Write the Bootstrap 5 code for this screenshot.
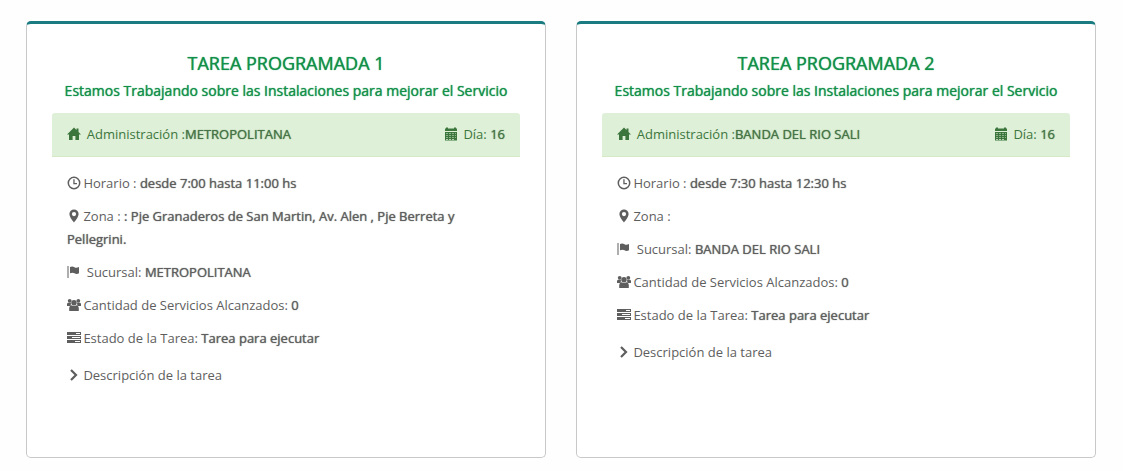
<!DOCTYPE html>
<html lang="es">
<head>
<meta charset="utf-8">
<meta name="viewport" content="width=device-width, initial-scale=1">
<title>Tareas programadas</title>
<link href="https://cdn.jsdelivr.net/npm/bootstrap@5.3.0/dist/css/bootstrap.min.css" rel="stylesheet">
<style>
body { font-family: "Open Sans", sans-serif; font-size: 13px; line-height: 23px; color: #5e5e5e; background: #fefefe; }
.page { padding: 21px 27px 13px 26px; }
.task-row { --bs-gutter-x: 30px; --bs-gutter-y: 30px; }
.task { border: 1px solid #c8c8c8; border-top: 3px solid #1a7b80; border-radius: 5px; background: #fff; padding: 28px 25px 60px; min-height: 437px; }
.task h2, .task h3, .task strong { font-weight: 400; text-shadow: 0 0 1px currentColor; }
.task h2 { font-size: 18px; line-height: 22px; color: #12904a; margin: 0 0 7px; }
.task h3 { font-size: 14px; line-height: 20px; color: #12904a; margin: 0 0 12px; }
.task-head { background: #dff0d8; color: #3c763d; border-bottom: 1px solid #d6e9c6; border-radius: 3px 3px 0 0; padding: 10px 15px; }
.task-head strong { color: #467446; }
.task-info { padding: 15px 15px 0; }
.task-info p { margin: 0 0 10px; }
.task a { color: inherit; text-decoration: none; display: inline-block; margin-top: 4px; }
.ico { width: 14px; height: 14px; margin-right: -1px; fill: currentColor; vertical-align: -2px; }
</style>
</head>
<body>
<svg class="d-none" aria-hidden="true">
  <symbol id="home" viewBox="0 0 14 14"><path d="M7 .5 0 7.600h2V13h3.600V9h2.800v4H12V7.600h2L11.500 5V1.500h-2V3z"/></symbol>
  <symbol id="calendar" viewBox="0 0 14 14"><path fill-rule="evenodd" d="M1 1.500h1V.500h2v1h6V.500h2v1h1V4H1zM1 5h12v8.500H1zM2 6.200v.6h2v-.6zm3 0v.6h2v-.6zm3 0v.6h2v-.6zm3 0v.6h1v-.6zM2 8.200v.6h2v-.6zm3 0v.6h2v-.6zm3 0v.6h2v-.6zm3 0v.6h1v-.6zM2 10.200v.6h2v-.6zm3 0v.6h2v-.6zm3 0v.6h2v-.6zm3 0v.6h1v-.6zM2 12.100v.6h2v-.6zm3 0v.6h2v-.6zm3 0v.6h2v-.6z"/></symbol>
  <symbol id="clock" viewBox="0 0 14 14"><circle cx="7" cy="7" r="5.700" fill="none" stroke="currentColor" stroke-width="1.500"/><path d="M6.300 3.300h1.300V7H10v1.300H6.300z"/></symbol>
  <symbol id="pin" viewBox="0 0 14 14"><path fill-rule="evenodd" d="M7 .500a4.600 4.600 0 0 0-4.600 4.600C2.400 8.500 7 13.500 7 13.500s4.600-5 4.600-8.400A4.600 4.600 0 0 0 7 .500zM7 3a2.100 2.100 0 1 1 0 4.200A2.100 2.100 0 0 1 7 3z"/></symbol>
  <symbol id="flag" viewBox="0 0 14 14"><path d="M.500 1h1v12h-1zM3 2c2-1 3.300-.5 4.500.200S10 3 12 2v6.300c-2 1-3.300.7-4.500 0S5 7.300 3 8.300z"/></symbol>
  <symbol id="users" viewBox="0 0 14 14"><circle cx="2.700" cy="2.800" r="1.900"/><circle cx="11.300" cy="2.800" r="1.900"/><path d="M0 8V6.300Q0 4.800 1 4.800h3L3.600 8zM14 8V6.300q0-1.500-1-1.500h-3l.4 3.200z"/><circle cx="7" cy="4.800" r="2.700"/><path d="M2.200 13V10q.2-2.500 2.300-2.700 2.500 1.500 5 0 2.100.2 2.300 2.700v3z"/></symbol>
  <symbol id="tasks" viewBox="0 0 14 14"><path fill-rule="evenodd" d="M0 1h14v3H0zM9 2v1h4V2zM0 5h14v3H0zM5 6v1h8V6zM0 9h14v3H0zM8 10v1h5v-1z"/></symbol>
  <symbol id="chevron" viewBox="0 0 14 14"><path d="m4 2 5 5-5 5" fill="none" stroke="currentColor" stroke-width="2.200"/></symbol>
</svg>
<main class="container-fluid page">
  <div class="row task-row">
    <div class="col-sm-6">
      <section class="task h-100">
        <h2 class="text-center">TAREA PROGRAMADA 1</h2>
        <h3 class="text-center">Estamos Trabajando sobre las Instalaciones para mejorar el Servicio</h3>
        <div class="task-head d-flex justify-content-between">
          <span><svg class="ico"><use href="#home"/></svg>&nbsp; Administración :<strong>METROPOLITANA</strong></span>
          <span><svg class="ico"><use href="#calendar"/></svg>&nbsp; Día: <strong>16</strong></span>
        </div>
        <div class="task-info">
          <p><svg class="ico"><use href="#clock"/></svg> Horario : <strong>desde 7:00 hasta 11:00 hs</strong></p>
          <p><svg class="ico"><use href="#pin"/></svg> Zona : <strong>: Pje Granaderos de San Martin, Av. Alen , Pje Berreta y Pellegrini.</strong></p>
          <p><svg class="ico"><use href="#flag"/></svg>&nbsp; Sucursal: <strong>METROPOLITANA</strong></p>
          <p><svg class="ico"><use href="#users"/></svg> Cantidad de Servicios Alcanzados: <strong>0</strong></p>
          <p><svg class="ico"><use href="#tasks"/></svg> Estado de la Tarea: <strong>Tarea para ejecutar</strong></p>
          <a href="#"><svg class="ico"><use href="#chevron"/></svg> Descripción de la tarea</a>
        </div>
      </section>
    </div>
    <div class="col-sm-6">
      <section class="task h-100">
        <h2 class="text-center">TAREA PROGRAMADA 2</h2>
        <h3 class="text-center">Estamos Trabajando sobre las Instalaciones para mejorar el Servicio</h3>
        <div class="task-head d-flex justify-content-between">
          <span><svg class="ico"><use href="#home"/></svg>&nbsp; Administración :<strong>BANDA DEL RIO SALI</strong></span>
          <span><svg class="ico"><use href="#calendar"/></svg>&nbsp; Día: <strong>16</strong></span>
        </div>
        <div class="task-info">
          <p><svg class="ico"><use href="#clock"/></svg> Horario : <strong>desde 7:30 hasta 12:30 hs</strong></p>
          <p><svg class="ico"><use href="#pin"/></svg> Zona :</p>
          <p><svg class="ico"><use href="#flag"/></svg>&nbsp; Sucursal: <strong>BANDA DEL RIO SALI</strong></p>
          <p><svg class="ico"><use href="#users"/></svg> Cantidad de Servicios Alcanzados: <strong>0</strong></p>
          <p><svg class="ico"><use href="#tasks"/></svg> Estado de la Tarea: <strong>Tarea para ejecutar</strong></p>
          <a href="#"><svg class="ico"><use href="#chevron"/></svg> Descripción de la tarea</a>
        </div>
      </section>
    </div>
  </div>
</main>
<script src="https://cdn.jsdelivr.net/npm/bootstrap@5.3.0/dist/js/bootstrap.bundle.min.js"></script>
</body>
</html>
